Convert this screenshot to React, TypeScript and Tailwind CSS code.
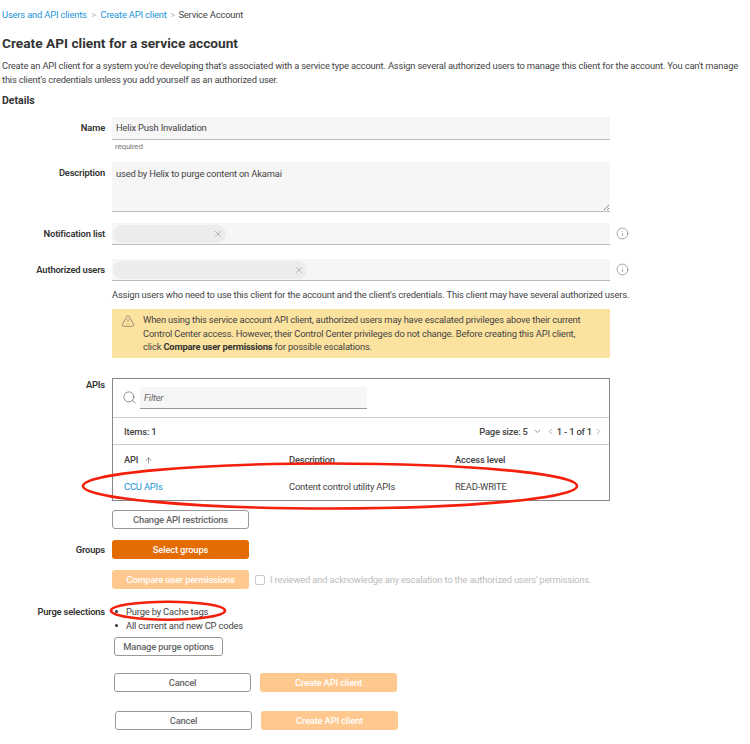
import { Info, Search, TriangleAlert, ArrowUp, ChevronDown, ChevronLeft, ChevronRight, X } from 'lucide-react';

const Row = ({ label, className, children }: { label: string; className?: string; children: React.ReactNode }) => (
  <div className={`flex ${className ?? ''}`}>
    <div className="w-[105px] shrink-0 text-right font-semibold text-[#333]">{label}</div>
    <div className="ml-[7px] w-[498px]">{children}</div>
  </div>
);

const Chip = ({ width }: { width: string }) => (
  <div className={`flex h-[18px] items-center justify-end rounded-full bg-[#ececec] pr-[3px] ${width}`}>
    <X size={10} className="text-[#aaa]" />
  </div>
);

const OutlineButton = ({ className, children }: { className: string; children: React.ReactNode }) => (
  <button className={`block h-[19px] rounded-[3px] border border-[#999] bg-white text-center font-medium leading-[17px] text-[#666] ${className}`}>
    {children}
  </button>
);

export default function App() {
  return (
    <div className="relative h-[744px] w-[750px] overflow-hidden bg-white text-[9.4px] leading-[14px] tracking-[-0.18px] text-[#444] [font-family:Roboto,sans-serif]">
      {/* Breadcrumbs */}
      <div className="flex items-center pl-[2px] pt-[8px]">
        <span className="text-[#1a94d6]">Users and API clients</span>
        <span className="mx-[4.5px] text-[#bbb]">&gt;</span>
        <span className="text-[#1a94d6]">Create API client</span>
        <span className="mx-[3.5px] text-[#bbb]">&gt;</span>
        <span>Service Account</span>
      </div>

      <h1 className="mt-[11px] pl-[2px] text-[13.7px] font-bold leading-[20px] tracking-normal text-[#333]">Create API client for a service account</h1>
      <p className="mt-[6px] whitespace-nowrap pl-[2px]">
        Create an API client for a system you're developing that's associated with a service type account. Assign several authorized users to manage this client for the account. You can't manage
        <br />
        this client's credentials unless you add yourself as an authorized user.
      </p>
      <h2 className="mt-[7px] pl-[2px] text-[10.5px] font-bold leading-[14px] tracking-normal text-[#333]">Details</h2>

      {/* Form */}
      <Row label="Name" className="mt-[9px] leading-[22px]">
        <div className="h-[23px] border-b border-[#bbb] bg-[#f6f6f6] pl-[4px]">Helix Push Invalidation</div>
        <div className="pl-[3px] text-[8px] leading-[13px] text-[#777]">required</div>
      </Row>

      <Row label="Description" className="mt-[9px] pt-[4px] leading-[14px]">
        <div className="relative -mt-[4px] h-[50px] border-b border-[#bbb] bg-[#f6f6f6] pl-[4px] pt-[5px]">
          used by Helix to purge content on Akamai
          <div className="absolute bottom-[1px] right-[1px] h-[5px] w-[5px] bg-[linear-gradient(135deg,transparent_50%,#888_50%,#888_60%,transparent_60%,transparent_75%,#888_75%,#888_85%,transparent_85%)]" />
        </div>
      </Row>

      <Row label="Notification list" className="relative mt-[11px] leading-[21px]">
        <div className="h-[22px] border-b border-[#bbb] bg-[#f6f6f6] pl-[1px] pt-[2px]">
          <Chip width="w-[113px]" />
        </div>
        <Info size={13} strokeWidth={1.2} className="absolute left-[616px] top-[4px] text-[#777]" />
      </Row>

      <Row label="Authorized users" className="relative mt-[14px] leading-[21px]">
        <div className="h-[22px] border-b border-[#bbb] bg-[#f6f6f6] pl-[1px] pt-[2px]">
          <Chip width="w-[194px]" />
        </div>
        <Info size={13} strokeWidth={1.2} className="absolute left-[616px] top-[4px] text-[#777]" />
      </Row>

      <div className="ml-[112px] mt-[7px] w-[560px] whitespace-nowrap">Assign users who need to use this client for the account and the client's credentials. This client may have several authorized users.</div>

      <div className="ml-[112px] mt-[7px] flex h-[49px] w-[498px] bg-[#fce29f] pl-[9px] pt-[4px]">
        <TriangleAlert size={14} strokeWidth={1} className="mt-[1px] shrink-0 text-[#555]" />
        <p className="ml-[8px] w-[460px] whitespace-nowrap leading-[13.7px]">
          When using this service account API client, authorized users may have escalated privileges above their current
          <br />
          Control Center access. However, their Control Center privileges do not change. Before creating this API client,
          <br />
          click <b className="font-bold text-[#333]">Compare user permissions</b> for possible escalations.
        </p>
      </div>

      {/* APIs table */}
      <Row label="APIs" className="mt-[20px]">
        <div className="h-[123px] border border-[#888]">
          <div className="flex h-[39px] items-start border-b border-[#ccc] pl-[9px] pt-[8px]">
            <Search size={15} strokeWidth={1} className="mt-[3px] text-[#555]" />
            <div className="ml-[3px] h-[22px] w-[227px] border-b border-[#999] bg-[#f6f6f6] pl-[4px] italic leading-[22px] text-[#666]">Filter</div>
          </div>
          <div className="flex h-[27px] items-center justify-between border-b border-[#ccc] pl-[11px] pr-[6px] pt-[1px] font-medium">
            <span>Items: 1</span>
            <span className="flex items-center">
              Page size: 5
              <ChevronDown size={9} className="ml-[5px] text-[#777]" />
              <ChevronLeft size={9} className="ml-[4px] text-[#999]" />
              <span className="mx-[2px]">1 - 1 of 1</span>
              <ChevronRight size={9} className="text-[#999]" />
            </span>
          </div>
          <div className="flex h-[28px] items-center pl-[11px] pt-[2px] font-medium">
            <span className="flex w-[165px] items-center">API<ArrowUp size={9} className="ml-[6px] text-[#777]" /></span>
            <span className="w-[166px]">Description</span>
            <span>Access level</span>
          </div>
          <div className="flex h-[26px] items-center pl-[11px] pt-[1px]">
            <span className="w-[165px] text-[#1a94d6]">CCU APIs</span>
            <span className="w-[166px]">Content control utility APIs</span>
            <span>READ-WRITE</span>
          </div>
        </div>
        <OutlineButton className="mt-[9px] w-[137px]">Change API restrictions</OutlineButton>
      </Row>

      <Row label="Groups" className="mt-[11px] leading-[19px]">
        <button className="block h-[19px] w-[137px] rounded-[3px] bg-[#e36c05] font-medium leading-[17px] text-white">Select groups</button>
      </Row>

      <div className="ml-[112px] mt-[11px] flex items-center">
        <button className="h-[19px] w-[137px] rounded-[3px] bg-[#ffc88f] font-medium text-white">Compare user permissions</button>
        <div className="ml-[6px] h-[10px] w-[10px] rounded-[2px] border border-[#ccc]" />
        <span className="ml-[5px] whitespace-nowrap text-[#bbb]">I reviewed and acknowledge any escalation to the authorized users' permissions.</span>
      </div>

      <Row label="Purge selections" className="mt-[16px]">
        <ul className="pl-[14px] text-[#444]">
          <li className="relative before:absolute before:-left-[11px] before:top-[5px] before:h-[3px] before:w-[3px] before:rounded-full before:bg-[#333]">Purge by Cache tags</li>
          <li className="relative before:absolute before:-left-[11px] before:top-[5px] before:h-[3px] before:w-[3px] before:rounded-full before:bg-[#333]">All current and new CP codes</li>
        </ul>
      </Row>

      <OutlineButton className="ml-[114px] mt-[4px] w-[109px]">Manage purge options</OutlineButton>

      <div className="ml-[114px] mt-[17px] flex gap-[9px]">
        <OutlineButton className="w-[137px]">Cancel</OutlineButton>
        <button className="h-[19px] w-[137px] rounded-[3px] bg-[#ffc88f] font-medium text-white">Create API client</button>
      </div>
      <div className="ml-[115px] mt-[19px] flex gap-[9px]">
        <OutlineButton className="w-[137px]">Cancel</OutlineButton>
        <button className="h-[19px] w-[137px] rounded-[3px] bg-[#ffc88f] font-medium text-white">Create API client</button>
      </div>

      {/* Red annotation ellipses */}
      <svg className="pointer-events-none absolute left-0 top-0" width="750" height="744" fill="none" stroke="#f4200c">
        <ellipse cx="330" cy="486" rx="247" ry="22.5" strokeWidth="2.6" />
        <ellipse cx="168" cy="610.7" rx="57" ry="9" strokeWidth="2.6" />
      </svg>
    </div>
  );
}
